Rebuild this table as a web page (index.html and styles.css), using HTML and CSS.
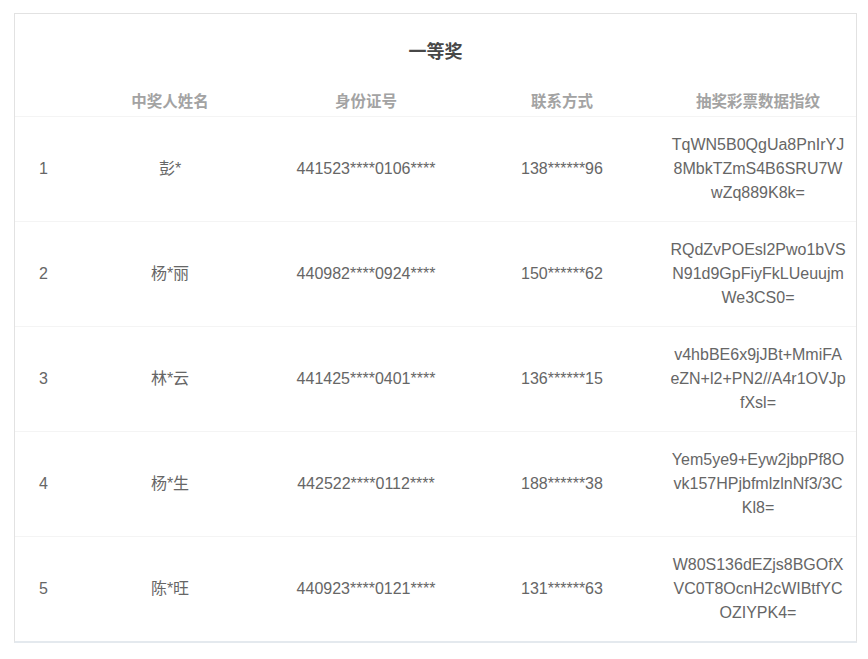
FILE: index.html
```html
<!DOCTYPE html>
<html lang="zh-CN">
<head>
<meta charset="utf-8">
<title>一等奖</title>
<link rel="stylesheet" href="styles.css">
</head>
<body>
<div class="panel">
  <div class="panel-title">一等奖</div>
  <table class="winners">
    <colgroup>
      <col class="c-idx">
      <col class="c-col">
      <col class="c-col">
      <col class="c-col">
      <col class="c-col">
    </colgroup>
    <thead>
      <tr>
        <th></th>
        <th>中奖人姓名</th>
        <th>身份证号</th>
        <th>联系方式</th>
        <th>抽奖彩票数据指纹</th>
      </tr>
    </thead>
    <tbody>
      <tr>
        <td>1</td>
        <td>彭*</td>
        <td>441523****0106****</td>
        <td>138******96</td>
        <td class="hash">TqWN5B0QgUa8PnIrYJ8MbkTZmS4B6SRU7WwZq889K8k=</td>
      </tr>
      <tr>
        <td>2</td>
        <td>杨*丽</td>
        <td>440982****0924****</td>
        <td>150******62</td>
        <td class="hash">RQdZvPOEsl2Pwo1bVSN91d9GpFiyFkLUeuujmWe3CS0=</td>
      </tr>
      <tr>
        <td>3</td>
        <td>林*云</td>
        <td>441425****0401****</td>
        <td>136******15</td>
        <td class="hash">v4hbBE6x9jJBt+MmiFAeZN+l2+PN2//A4r1OVJpfXsl=</td>
      </tr>
      <tr>
        <td>4</td>
        <td>杨*生</td>
        <td>442522****0112****</td>
        <td>188******38</td>
        <td class="hash">Yem5ye9+Eyw2jbpPf8Ovk157HPjbfmlzlnNf3/3CKl8=</td>
      </tr>
      <tr>
        <td>5</td>
        <td>陈*旺</td>
        <td>440923****0121****</td>
        <td>131******63</td>
        <td class="hash">W80S136dEZjs8BGOfXVC0T8OcnH2cWIBtfYCOZIYPK4=</td>
      </tr>
    </tbody>
  </table>
</div>
</body>
</html>
```

FILE: styles.css
```css
html, body {
  margin: 0;
  background: #ffffff;
}

body {
  padding: 13px 11px 0 14px;
  font-family: "Liberation Sans", Arial, "Noto Sans CJK SC", sans-serif;
  font-size: 16px;
  color: #666666;
}

.panel {
  border: 1px solid #e2e2e2;
  border-bottom: 2px solid #e4e9ee;
  background: #ffffff;
}

.panel-title {
  padding: 24px 0 22px;
  line-height: 24px;
  height: 24px;
  text-align: center;
  font-size: 18px;
  font-weight: bold;
  color: #474747;
  font-family: "Noto Sans CJK SC", sans-serif;
}

.winners {
  width: 100%;
  border-collapse: collapse;
  table-layout: fixed;
}

.c-idx {
  width: 57px;
}

.c-col {
  width: 196px;
}

.winners th {
  height: 32px;
  padding: 0;
  line-height: 32px;
  font-family: "Noto Sans CJK SC", sans-serif;
  font-size: 15.5px;
  font-weight: bold;
  color: #a3a3a3;
  text-align: center;
  border-bottom: 1px solid #f4f4f4;
}

.winners td {
  height: 72px;
  padding: 16px 9px;
  line-height: 24px;
  text-align: center;
  vertical-align: middle;
  border-bottom: 1px solid #f4f4f4;
  font-family: "Liberation Sans", Arial, "Noto Sans CJK SC", sans-serif;
}

.winners tbody tr:last-child td {
  border-bottom: none;
}

.winners td.hash {
  padding-left: 9.75px;
  padding-right: 9.75px;
  word-break: break-all;
}
```
